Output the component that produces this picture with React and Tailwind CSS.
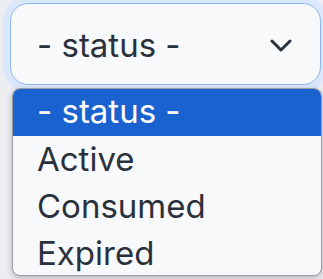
import React from 'react';

const options = ['- status -', 'Active', 'Consumed', 'Expired'];

const App = () => {
    return (
        <div className="w-[323px] h-[279px] overflow-hidden bg-[#eceef1] pt-[3px] pl-[10px] font-['Inter','Liberation_Sans',sans-serif] text-[#2b313c]">
            <div className="w-[311px] h-[82px] rounded-[18px] border-[1.5px] border-[#8fb4f4] bg-[#f8f9fb] ring-[7px] ring-[#dbe7fb] flex items-center justify-between pl-[26px] pr-[28px]">
                <span className="text-[33px] leading-none pt-[2px]">- status -</span>
                <svg width="22" height="16" viewBox="0 0 22 16" fill="none" className="mt-[4px]">
                    <polyline points="2,3 11,12 20,3" stroke="#2b313c" strokeWidth="3" strokeLinecap="round" strokeLinejoin="round" />
                </svg>
            </div>
            <div className="mt-[3px] ml-[2px] w-[310px] h-[188px] rounded-[8px] border border-[#9a9ca0] bg-[#f8f9fb] overflow-hidden shadow-[0_2px_6px_rgba(0,0,0,0.25)]">
                {options.map((opt, i) => (
                    <div
                        key={opt}
                        className={i === 0
                            ? 'h-[47px] bg-[#1a62d0] text-white text-[33px] leading-[44px] pl-[24px]'
                            : 'h-[47px] text-[33px] leading-[47px] pl-[24px]'}
                    >
                        {opt}
                    </div>
                ))}
            </div>
        </div>
    );
};

export default App;
